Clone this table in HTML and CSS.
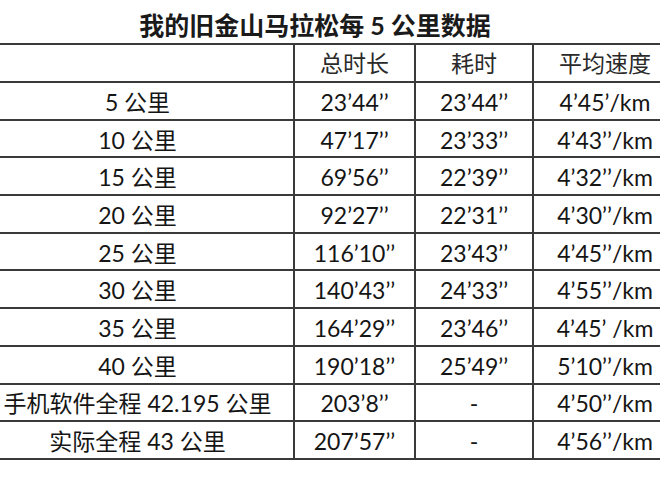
FILE: index.html
```html
<!DOCTYPE html>
<html lang="zh-CN">
<head>
<meta charset="utf-8">
<title>我的旧金山马拉松每 5 公里数据</title>
<link rel="stylesheet" href="styles.css">
</head>
<body>
<div class="sheet">
  <h1 class="title">我的旧金山马拉松每 5 公里数据</h1>
  <div class="grid">
    <div class="cell head"></div>
    <div class="cell head">总时长</div>
    <div class="cell head">耗时</div>
    <div class="cell head">平均速度</div>

    <div class="cell">5 公里</div>
    <div class="cell">23’44’’</div>
    <div class="cell">23’44’’</div>
    <div class="cell">4’45’/km</div>

    <div class="cell">10 公里</div>
    <div class="cell">47’17’’</div>
    <div class="cell">23’33’’</div>
    <div class="cell">4’43’’/km</div>

    <div class="cell">15 公里</div>
    <div class="cell">69’56’’</div>
    <div class="cell">22’39’’</div>
    <div class="cell">4’32’’/km</div>

    <div class="cell">20 公里</div>
    <div class="cell">92’27’’</div>
    <div class="cell">22’31’’</div>
    <div class="cell">4’30’’/km</div>

    <div class="cell">25 公里</div>
    <div class="cell">116’10’’</div>
    <div class="cell">23’43’’</div>
    <div class="cell">4’45’’/km</div>

    <div class="cell">30 公里</div>
    <div class="cell">140’43’’</div>
    <div class="cell">24’33’’</div>
    <div class="cell">4’55’’/km</div>

    <div class="cell">35 公里</div>
    <div class="cell">164’29’’</div>
    <div class="cell">23’46’’</div>
    <div class="cell">4’45’ /km</div>

    <div class="cell">40 公里</div>
    <div class="cell">190’18’’</div>
    <div class="cell">25’49’’</div>
    <div class="cell">5’10’’/km</div>

    <div class="cell">手机软件全程 42.195 公里</div>
    <div class="cell">203’8’’</div>
    <div class="cell">-</div>
    <div class="cell">4’50’’/km</div>

    <div class="cell">实际全程 43 公里</div>
    <div class="cell">207’57’’</div>
    <div class="cell">-</div>
    <div class="cell">4’56’’/km</div>
  </div>
</div>
</body>
</html>
```

FILE: styles.css
```css
html, body {
  margin: 0;
  padding: 0;
  background: #ffffff;
  overflow: hidden;
}

body {
  width: 660px;
  height: 503px;
  font-family: Lato, "Noto Sans CJK SC", sans-serif;
  font-kerning: none;
  color: #151515;
}

.sheet {
  width: 694px;
  margin-left: -18px;
}

.title {
  margin: 0;
  height: 43px;
  box-sizing: border-box;
  padding: 7px 28px 0 0;
  font-size: 25px;
  line-height: 36px;
  font-weight: 700;
  text-align: center;
  color: #1a1a1a;
  white-space: nowrap;
}

.grid {
  display: grid;
  grid-template-columns: 313px 121px 118px 142px;
  grid-template-rows: 38px repeat(10, 37.7px);
  border-top: 2px solid #3a3a3a;
}

.cell {
  box-sizing: border-box;
  border-right: 2px solid #3a3a3a;
  border-bottom: 2px solid #3a3a3a;
  display: flex;
  align-items: center;
  justify-content: center;
  padding-top: 3px;
  font-size: 23px;
  line-height: 1;
  white-space: nowrap;
}

.cell:nth-child(4n) {
  border-right: none;
}

.head {
  color: #2a2a2a;
  padding-top: 0;
}
```
